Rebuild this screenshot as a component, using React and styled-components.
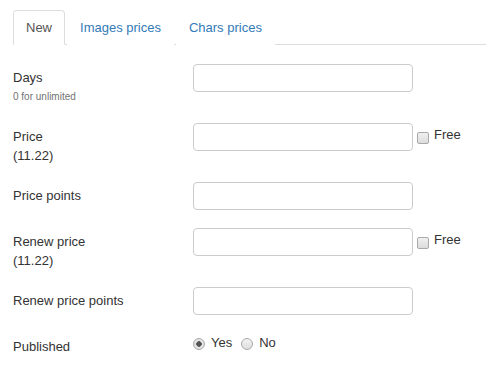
import React from "react";
import styled, { createGlobalStyle } from "styled-components";

const GlobalStyle = createGlobalStyle`
	body {
		margin: 0;
		background: #fff;
		font-family: "Liberation Sans", Arial, sans-serif;
		font-size: 13px;
		line-height: 1.42857;
		color: #333;
	}
`;

const Page = styled.div`
	padding: 10px 1px 0 13px;
`;

//Tabs

const TabBar = styled.ul`
	display: flex;
	margin: 0;
	padding: 0;
	list-style: none;
	border-bottom: 1px solid #ddd;
`;

const Tab = styled.li`
	margin: 0 2px -1px 0;
	padding: 8px 12px;
	line-height: 17px;
	border: 1px solid ${({ active }) => (active ? "#ddd" : "transparent")};
	border-bottom-color: ${({ active }) => (active ? "#fff" : "transparent")};
	border-radius: 4px 4px 0 0;
	background: #fff;
	color: ${({ active }) => (active ? "#555" : "#337ab7")};
	cursor: pointer;
`;

//Form

const Form = styled.form`
	margin-top: 19px;
`;

const Row = styled.div`
	display: grid;
	grid-template-columns: 180px auto;
	min-height: 29px;
	margin-bottom: 17px;
`;

const Label = styled.label`
	padding-top: 5px;
	line-height: 18.57px;
`;

const Hint = styled.small`
	display: block;
	font-size: 10px;
	color: #737373;
`;

const Controls = styled.div`
	display: flex;
	align-items: flex-start;
`;

const TextInput = styled.input`
	box-sizing: border-box;
	width: 220px;
	height: 28px;
	margin: 0;
	padding: 4px 8px;
	border: 1px solid #ccc;
	border-radius: 4px;
	font: inherit;
	color: #555;
	outline: none;
`;

const CheckLabel = styled.label`
	display: flex;
	align-items: flex-start;
	margin-left: 4px;
`;

const Box = styled.input`
	appearance: none;
	box-sizing: border-box;
	width: 12px;
	height: 12px;
	margin: 9px 5px 0 0;
	border: 1px solid #a9a9a9;
	border-radius: 2px;
	background: linear-gradient(#f0f0f0, #dcdcdc);
`;

const CheckText = styled.span`
	margin-top: 3px;
`;

const Radios = styled.div`
	display: flex;
	align-items: flex-start;
	padding-top: 1px;
`;

const RadioLabel = styled.label`
	display: flex;
	align-items: center;
	margin-right: 9px;
	line-height: 18.57px;
`;

const Radio = styled.input`
	appearance: none;
	box-sizing: border-box;
	width: 12px;
	height: 12px;
	margin: 0 6px 0 0;
	border: 1px solid #aaa;
	border-radius: 50%;
	background: ${({ checked }) =>
		checked
			? "radial-gradient(circle, #555 0 2.5px, #e4e4e4 3px)"
			: "linear-gradient(#f2f2f2, #dedede)"};
`;

const FreeCheck = () => (
	<CheckLabel>
		<Box type="checkbox" />
		<CheckText>Free</CheckText>
	</CheckLabel>
);

const App = () => (
	<Page>
		<GlobalStyle />
		<TabBar>
			<Tab active>New</Tab>
			<Tab>Images prices</Tab>
			<Tab>Chars prices</Tab>
		</TabBar>
		<Form>
			<Row>
				<Label>
					Days
					<Hint>0 for unlimited</Hint>
				</Label>
				<Controls>
					<TextInput type="text" />
				</Controls>
			</Row>
			<Row>
				<Label>
					Price
					<br />
					(11.22)
				</Label>
				<Controls>
					<TextInput type="text" />
					<FreeCheck />
				</Controls>
			</Row>
			<Row>
				<Label>Price points</Label>
				<Controls>
					<TextInput type="text" />
				</Controls>
			</Row>
			<Row>
				<Label>
					Renew price
					<br />
					(11.22)
				</Label>
				<Controls>
					<TextInput type="text" />
					<FreeCheck />
				</Controls>
			</Row>
			<Row>
				<Label>Renew price points</Label>
				<Controls>
					<TextInput type="text" />
				</Controls>
			</Row>
			<Row>
				<Label>Published</Label>
				<Radios>
					<RadioLabel>
						<Radio type="radio" name="published" defaultChecked checked readOnly />
						Yes
					</RadioLabel>
					<RadioLabel>
						<Radio type="radio" name="published" />
						No
					</RadioLabel>
				</Radios>
			</Row>
		</Form>
	</Page>
);

export default App;
